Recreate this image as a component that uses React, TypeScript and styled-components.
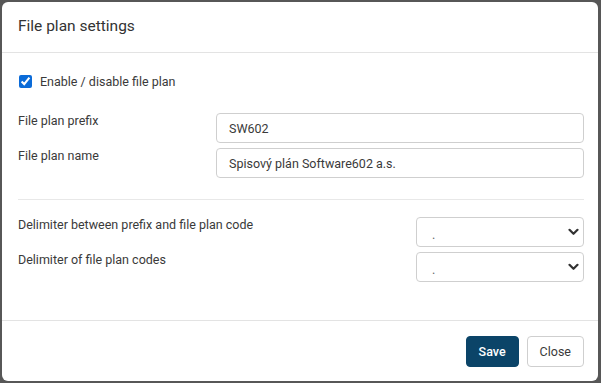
import React, {FC} from 'react';
import styled, {createGlobalStyle} from 'styled-components';

const GlobalStyle = createGlobalStyle`
  html, body {
    margin: 0;
    padding: 0;
    background: #575757;
  }
  body {
    font-family: Roboto, "Liberation Sans", sans-serif;
    color: #3a3a3a;
  }
`;

const Chevron: FC = () => (
  <svg width="11" height="8" viewBox="0 0 11 8">
    <path d="M1.5 1.8 L5.5 5.8 L9.5 1.8" fill="none" stroke="#333" strokeWidth="2.2" strokeLinecap="round" strokeLinejoin="round" />
  </svg>
);

const App: FC = () => (
  <>
    <GlobalStyle />
    <Backdrop>
      <Modal>
        <Header>
          <Title>File plan settings</Title>
        </Header>
        <Body>
          <CheckRow>
            <Check type="checkbox" defaultChecked />
            <span>Enable / disable file plan</span>
          </CheckRow>
          <Group $top={24}>
            <FieldRow>
              <Label>File plan prefix</Label>
              <TextInput defaultValue="SW602" />
            </FieldRow>
            <FieldRow>
              <Label>File plan name</Label>
              <TextInput defaultValue="Spisový plán Software602 a.s." />
            </FieldRow>
          </Group>
          <Divider />
          <Group $top={17}>
            <FieldRow>
              <Label>Delimiter between prefix and file plan code</Label>
              <Select>
                <SelectValue>.</SelectValue>
                <Chevron />
              </Select>
            </FieldRow>
            <FieldRow>
              <Label>Delimiter of file plan codes</Label>
              <Select>
                <SelectValue>.</SelectValue>
                <Chevron />
              </Select>
            </FieldRow>
          </Group>
        </Body>
        <Footer>
          <Button $primary>Save</Button>
          <Button>Close</Button>
        </Footer>
      </Modal>
    </Backdrop>
  </>
);

const Backdrop = styled.div`
  width: 601px;
  height: 383px;
  padding: 2px 3px 2px 2px;
  box-sizing: border-box;
`;

const Modal = styled.div`
  width: 596px;
  height: 379px;
  background: #fff;
  border-radius: 6px;
  display: flex;
  flex-direction: column;
  overflow: hidden;
`;

const Header = styled.div`
  height: 50px;
  border-bottom: 1px solid #e3e3e3;
  display: flex;
  align-items: center;
  padding: 0 16px;
`;

const Title = styled.h2`
  margin: 0;
  font-size: 15.5px;
  font-weight: 400;
  color: #333;
  padding-bottom: 2px;
`;

const Body = styled.div`
  flex: 1;
  padding: 20px 14px 0 16px;
`;

const CheckRow = styled.label`
  display: flex;
  align-items: center;
  gap: 8px;
  font-size: 12.5px;
  height: 16px;
`;

const Check = styled.input`
  width: 13px;
  height: 13px;
  margin: 0 0 0 1px;
  accent-color: #0b6bd8;
`;

const Group = styled.div<{$top: number}>`
  display: flex;
  flex-direction: column;
  gap: 5px;
  margin-top: ${({$top}) => $top}px;
`;

const FieldRow = styled.div`
  display: flex;
  justify-content: space-between;
  align-items: flex-start;
`;

const Label = styled.div`
  font-size: 12.5px;
  line-height: 16px;
`;

const TextInput = styled.input`
  width: 368px;
  height: 30px;
  box-sizing: border-box;
  border: 1px solid #cfcfcf;
  border-radius: 4px;
  padding: 0 12px;
  font: inherit;
  font-size: 12.5px;
  color: #3a3a3a;
  outline: none;
`;

const Select = styled.div`
  width: 168px;
  height: 30px;
  box-sizing: border-box;
  border: 1px solid #cfcfcf;
  border-radius: 4px;
  padding: 0 4px 0 15px;
  display: flex;
  align-items: center;
  justify-content: space-between;
`;

const SelectValue = styled.span`
  font-size: 12.5px;
  color: #666;
  padding-top: 4px;
`;

const Divider = styled.hr`
  border: none;
  border-top: 1px solid #e8e8e8;
  margin: 21px 0 0;
`;

const Footer = styled.div`
  height: 60px;
  border-top: 1px solid #e3e3e3;
  display: flex;
  align-items: center;
  justify-content: flex-end;
  gap: 8px;
  padding: 0 14px 0 0;
`;

const Button = styled.button<{$primary?: boolean}>`
  height: 31px;
  box-sizing: border-box;
  border-radius: 4px;
  font: inherit;
  font-size: 12.5px;
  font-weight: ${({$primary}) => ($primary ? 500 : 400)};
  padding: 0 12px;
  background: ${({$primary}) => ($primary ? '#0b4468' : '#fff')};
  color: ${({$primary}) => ($primary ? '#fff' : '#3a3a3a')};
  border: 1px solid ${({$primary}) => ($primary ? '#0b4468' : '#cfcfcf')};
`;

export default App;
